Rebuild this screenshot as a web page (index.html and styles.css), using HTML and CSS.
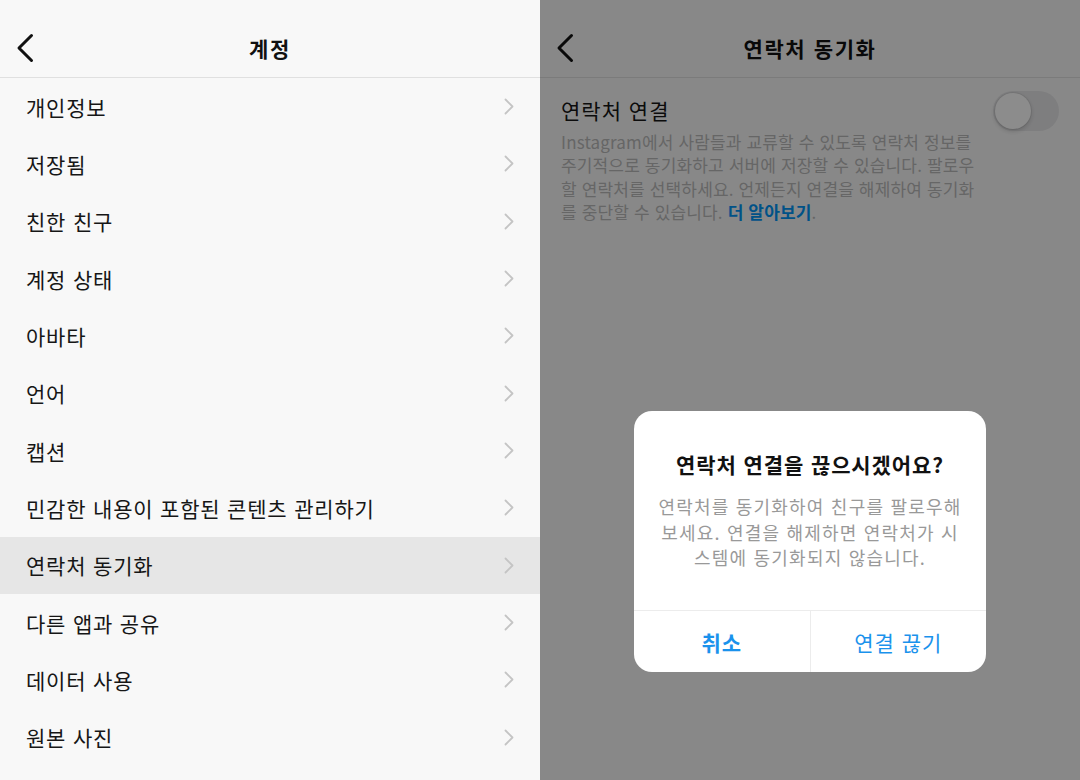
FILE: index.html
```html
<!DOCTYPE html>
<html lang="ko">
<head>
<meta charset="utf-8">
<title>계정</title>
<link rel="stylesheet" href="styles.css">
</head>
<body>
<div class="screen">
  <section class="panel">
    <header class="nav">
      <span class="nav-back">
        <svg width="20" height="32" viewBox="0 0 20 32"><polyline points="16.5,3.5 4,16 16.5,28.5" fill="none" stroke="#111" stroke-width="3" stroke-linecap="round" stroke-linejoin="round"/></svg>
      </span>
      <h1 class="nav-title">계정</h1>
      <span></span>
    </header>
    <ul class="menu">
      <li class="menu-item"><span>개인정보</span><svg class="chev" width="10" height="17" viewBox="0 0 10 17"><polyline points="1.5,1.5 8.5,8.5 1.5,15.5"/></svg></li>
      <li class="menu-item"><span>저장됨</span><svg class="chev" width="10" height="17" viewBox="0 0 10 17"><polyline points="1.5,1.5 8.5,8.5 1.5,15.5"/></svg></li>
      <li class="menu-item"><span>친한 친구</span><svg class="chev" width="10" height="17" viewBox="0 0 10 17"><polyline points="1.5,1.5 8.5,8.5 1.5,15.5"/></svg></li>
      <li class="menu-item"><span>계정 상태</span><svg class="chev" width="10" height="17" viewBox="0 0 10 17"><polyline points="1.5,1.5 8.5,8.5 1.5,15.5"/></svg></li>
      <li class="menu-item"><span>아바타</span><svg class="chev" width="10" height="17" viewBox="0 0 10 17"><polyline points="1.5,1.5 8.5,8.5 1.5,15.5"/></svg></li>
      <li class="menu-item"><span>언어</span><svg class="chev" width="10" height="17" viewBox="0 0 10 17"><polyline points="1.5,1.5 8.5,8.5 1.5,15.5"/></svg></li>
      <li class="menu-item"><span>캡션</span><svg class="chev" width="10" height="17" viewBox="0 0 10 17"><polyline points="1.5,1.5 8.5,8.5 1.5,15.5"/></svg></li>
      <li class="menu-item"><span>민감한 내용이 포함된 콘텐츠 관리하기</span><svg class="chev" width="10" height="17" viewBox="0 0 10 17"><polyline points="1.5,1.5 8.5,8.5 1.5,15.5"/></svg></li>
      <li class="menu-item is-active"><span>연락처 동기화</span><svg class="chev" width="10" height="17" viewBox="0 0 10 17"><polyline points="1.5,1.5 8.5,8.5 1.5,15.5"/></svg></li>
      <li class="menu-item"><span>다른 앱과 공유</span><svg class="chev" width="10" height="17" viewBox="0 0 10 17"><polyline points="1.5,1.5 8.5,8.5 1.5,15.5"/></svg></li>
      <li class="menu-item"><span>데이터 사용</span><svg class="chev" width="10" height="17" viewBox="0 0 10 17"><polyline points="1.5,1.5 8.5,8.5 1.5,15.5"/></svg></li>
      <li class="menu-item"><span>원본 사진</span><svg class="chev" width="10" height="17" viewBox="0 0 10 17"><polyline points="1.5,1.5 8.5,8.5 1.5,15.5"/></svg></li>
    </ul>
  </section>

  <section class="panel panel-detail">
    <header class="nav">
      <span class="nav-back">
        <svg width="20" height="32" viewBox="0 0 20 32"><polyline points="16.5,3.5 4,16 16.5,28.5" fill="none" stroke="#111" stroke-width="3" stroke-linecap="round" stroke-linejoin="round"/></svg>
      </span>
      <h1 class="nav-title">연락처 동기화</h1>
      <span></span>
    </header>
    <div class="setting">
      <div class="setting-text">
        <div class="setting-title">연락처 연결</div>
        <p class="setting-desc">Instagram에서 사람들과 교류할 수 있도록 연락처 정보를<br>주기적으로 동기화하고 서버에 저장할 수 있습니다. 팔로우<br>할 연락처를 선택하세요. 언제든지 연결을 해제하여 동기화<br>를 중단할 수 있습니다. <a class="link">더 알아보기</a>.</p>
      </div>
      <div class="toggle"><span class="toggle-knob"></span></div>
    </div>

    <div class="scrim">
      <div class="dialog">
        <div class="dialog-body">
          <h2 class="dialog-title">연락처 연결을 끊으시겠어요?</h2>
          <p class="dialog-msg">연락처를 동기화하여 친구를 팔로우해<br>보세요. 연결을 해제하면 연락처가 시<br>스템에 동기화되지 않습니다.</p>
        </div>
        <div class="dialog-actions">
          <button class="dialog-btn is-primary">취소</button>
          <button class="dialog-btn">연결 끊기</button>
        </div>
      </div>
    </div>
  </section>
</div>
</body>
</html>
```

FILE: styles.css
```css
* { box-sizing: border-box; }

html, body {
  margin: 0;
  padding: 0;
}

body {
  font-family: "Noto Sans CJK KR", "Noto Sans", sans-serif;
  color: #262626;
  background: #f8f8f8;
}

.screen {
  display: flex;
  width: 1080px;
  height: 780px;
  overflow: hidden;
}

.panel {
  position: relative;
  width: 540px;
  height: 780px;
  background: #f8f8f8;
  overflow: hidden;
}

.nav {
  display: grid;
  grid-template-columns: 1fr auto 1fr;
  align-items: center;
  height: 78px;
  padding-top: 19px;
  border-bottom: 1px solid #e0e0e0;
}

.nav-back {
  display: flex;
  align-items: center;
  padding-left: 15px;
}

.nav-back svg { display: block; }

.nav-title {
  margin: 0;
  font-size: 21px;
  font-weight: 700;
  line-height: 28px;
  letter-spacing: 1.6px;
  color: #111;
}

.menu {
  list-style: none;
  margin: 0;
  padding: 0;
}

.menu-item {
  display: flex;
  align-items: center;
  justify-content: space-between;
  height: 57.33px;
  padding: 0 26px 0 26px;
  font-size: 21px;
  line-height: 28px;
  letter-spacing: 0.8px;
  color: #161616;
}

.menu-item.is-active {
  background: #e6e6e6;
}

.chev {
  display: block;
  fill: none;
  stroke: #c4c4c4;
  stroke-width: 1.8;
  stroke-linecap: round;
  stroke-linejoin: round;
}

.setting {
  display: flex;
  align-items: flex-start;
  justify-content: space-between;
  padding: 16px 21px 0 21px;
}

.setting-title {
  font-size: 21px;
  line-height: 32px;
  letter-spacing: 1px;
  color: #161616;
}

.setting-desc {
  margin: 4px 0 0;
  font-size: 17px;
  line-height: 23.3px;
  letter-spacing: 0.15px;
  color: #bababa;
  white-space: nowrap;
}

.link {
  color: #0095f6;
  font-weight: 700;
}

.toggle {
  position: relative;
  width: 66px;
  height: 40px;
  margin-top: -3px;
  border-radius: 20px;
  background: #e6e6e8;
}

.toggle-knob {
  position: absolute;
  left: 2px;
  top: 2px;
  width: 36px;
  height: 36px;
  border-radius: 50%;
  background: #fff;
  box-shadow: 0 0 0 1px rgba(0,0,0,0.06), 0 2px 5px rgba(0,0,0,0.18);
}

.scrim {
  position: absolute;
  inset: 0;
  background: rgba(0, 0, 0, 0.45);
  display: flex;
  justify-content: center;
  align-items: flex-start;
  padding-top: 411px;
}

.dialog {
  width: 352px;
  height: 261px;
  background: #fff;
  border-radius: 18px;
  overflow: hidden;
  display: flex;
  flex-direction: column;
}

.dialog-body {
  height: 199px;
  padding-top: 38px;
  text-align: center;
}

.dialog-title {
  margin: 0;
  font-size: 21px;
  font-weight: 700;
  line-height: 30px;
  letter-spacing: 0.9px;
  color: #111;
}

.dialog-msg {
  margin: 15px 0 0;
  font-size: 18px;
  line-height: 25.5px;
  letter-spacing: 1.2px;
  color: #999;
  white-space: nowrap;
}

.dialog-actions {
  display: flex;
  flex: 1;
  border-top: 1px solid #ececec;
}

.dialog-btn {
  flex: 1;
  margin: 0;
  padding: 0;
  border: 0;
  background: transparent;
  font-family: "Noto Sans CJK KR", "Noto Sans", sans-serif;
  font-size: 21px;
  line-height: 28px;
  letter-spacing: 1px;
  color: #1a92ec;
}

.dialog-btn + .dialog-btn {
  border-left: 1px solid #ececec;
}

.dialog-btn.is-primary {
  font-weight: 700;
}
```
